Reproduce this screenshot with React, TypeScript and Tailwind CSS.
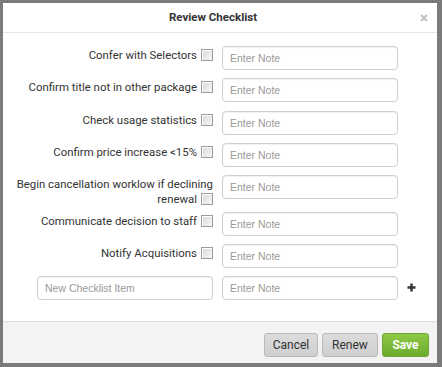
import React from "react";

const items = [
  "Confer with Selectors",
  "Confirm title not in other package",
  "Check usage statistics",
  "Confirm price increase <15%",
  "Begin cancellation worklow if declining renewal",
  "Communicate decision to staff",
  "Notify Acquisitions",
];

function Checkbox() {
  return (
    <span className="inline-block w-[12px] h-[12px] ml-[4px] align-[-2px] border border-[#9c9c9c] bg-gradient-to-br from-[#d9d9d9] to-[#f7f7f7] shadow-[inset_1px_1px_0_#fff]" />
  );
}

function NoteInput({ placeholder, width = "w-[176px]" }: { placeholder: string; width?: string }) {
  return (
    <input
      type="text"
      placeholder={placeholder}
      className={`${width} h-[24px] shrink-0 px-[7px] border border-[#cfcfcf] rounded-[4px] bg-white text-[10.5px] text-[#333] placeholder-[#999] shadow-[inset_0_1px_1px_rgba(0,0,0,0.06)] outline-none`}
      style={{ fontFamily: '"Liberation Sans", Arial, sans-serif' }}
    />
  );
}

export default function App() {
  return (
    <div
      className="w-[442px] h-[367px] bg-[#7a7a7a] pt-[3px] pl-[3px]"
      style={{ fontFamily: "Roboto, 'Liberation Sans', sans-serif" }}
    >
      <div className="w-[434px] h-[360px] bg-white flex flex-col">
        <div className="relative h-[30px] shrink-0 border-b border-[#e5e5e5] flex items-center justify-center pr-[14px]">
          <h2 className="text-[11.5px] font-bold text-[#333]">Review Checklist</h2>
          <svg
            className="absolute right-[9px] top-[11px]"
            width="8"
            height="8"
            viewBox="0 0 8 8"
          >
            <path d="M1 1L7 7M7 1L1 7" stroke="#c4c4c4" strokeWidth="2.2" />
          </svg>
        </div>

        <div className="flex-1 pt-[12px] pl-[13px]">
          {items.map((label, i) => (
            <div
              key={label}
              className={`flex items-start ${i === 4 ? "h-[28.75px]" : "h-[24px]"} mb-[8.25px]`}
            >
              <div className="w-[197px] shrink-0 text-right text-[11.4px] leading-[15px] text-[#333] pt-[3px]">
                {label}
                <Checkbox />
              </div>
              <div className="ml-[9px]">
                <NoteInput placeholder="Enter Note" />
              </div>
            </div>
          ))}
          <div className="flex items-center h-[24px]">
            <div className="w-[197px] shrink-0 flex justify-end">
              <NoteInput placeholder="New Checklist Item" width="w-[176px]" />
            </div>
            <div className="ml-[9px]">
              <NoteInput placeholder="Enter Note" />
            </div>
            <svg className="ml-[9px]" width="9" height="9" viewBox="0 0 9 9">
              <path d="M4.5 0.5V8.5M0.5 4.5H8.5" stroke="#333" strokeWidth="2.4" />
            </svg>
          </div>
        </div>

        <div className="h-[42px] shrink-0 border-t border-[#dcdcdc] bg-[#f3f3f3] flex justify-end items-start pt-[11px] pr-[8px] gap-[4px]">
          <button className="w-[54px] h-[24px] rounded-[3px] border border-[#b9b9b9] bg-gradient-to-b from-[#dcdcdc] to-[#cfcfcf] text-[12px] text-[#333]">
            Cancel
          </button>
          <button className="w-[56px] h-[24px] rounded-[3px] border border-[#b9b9b9] bg-gradient-to-b from-[#dcdcdc] to-[#cfcfcf] text-[12px] text-[#333]">
            Renew
          </button>
          <button className="w-[47px] h-[24px] rounded-[3px] border border-[#6ea536] bg-gradient-to-b from-[#8fca45] to-[#6aab2c] text-[12px] font-bold text-white">
            Save
          </button>
        </div>
      </div>
    </div>
  );
}
